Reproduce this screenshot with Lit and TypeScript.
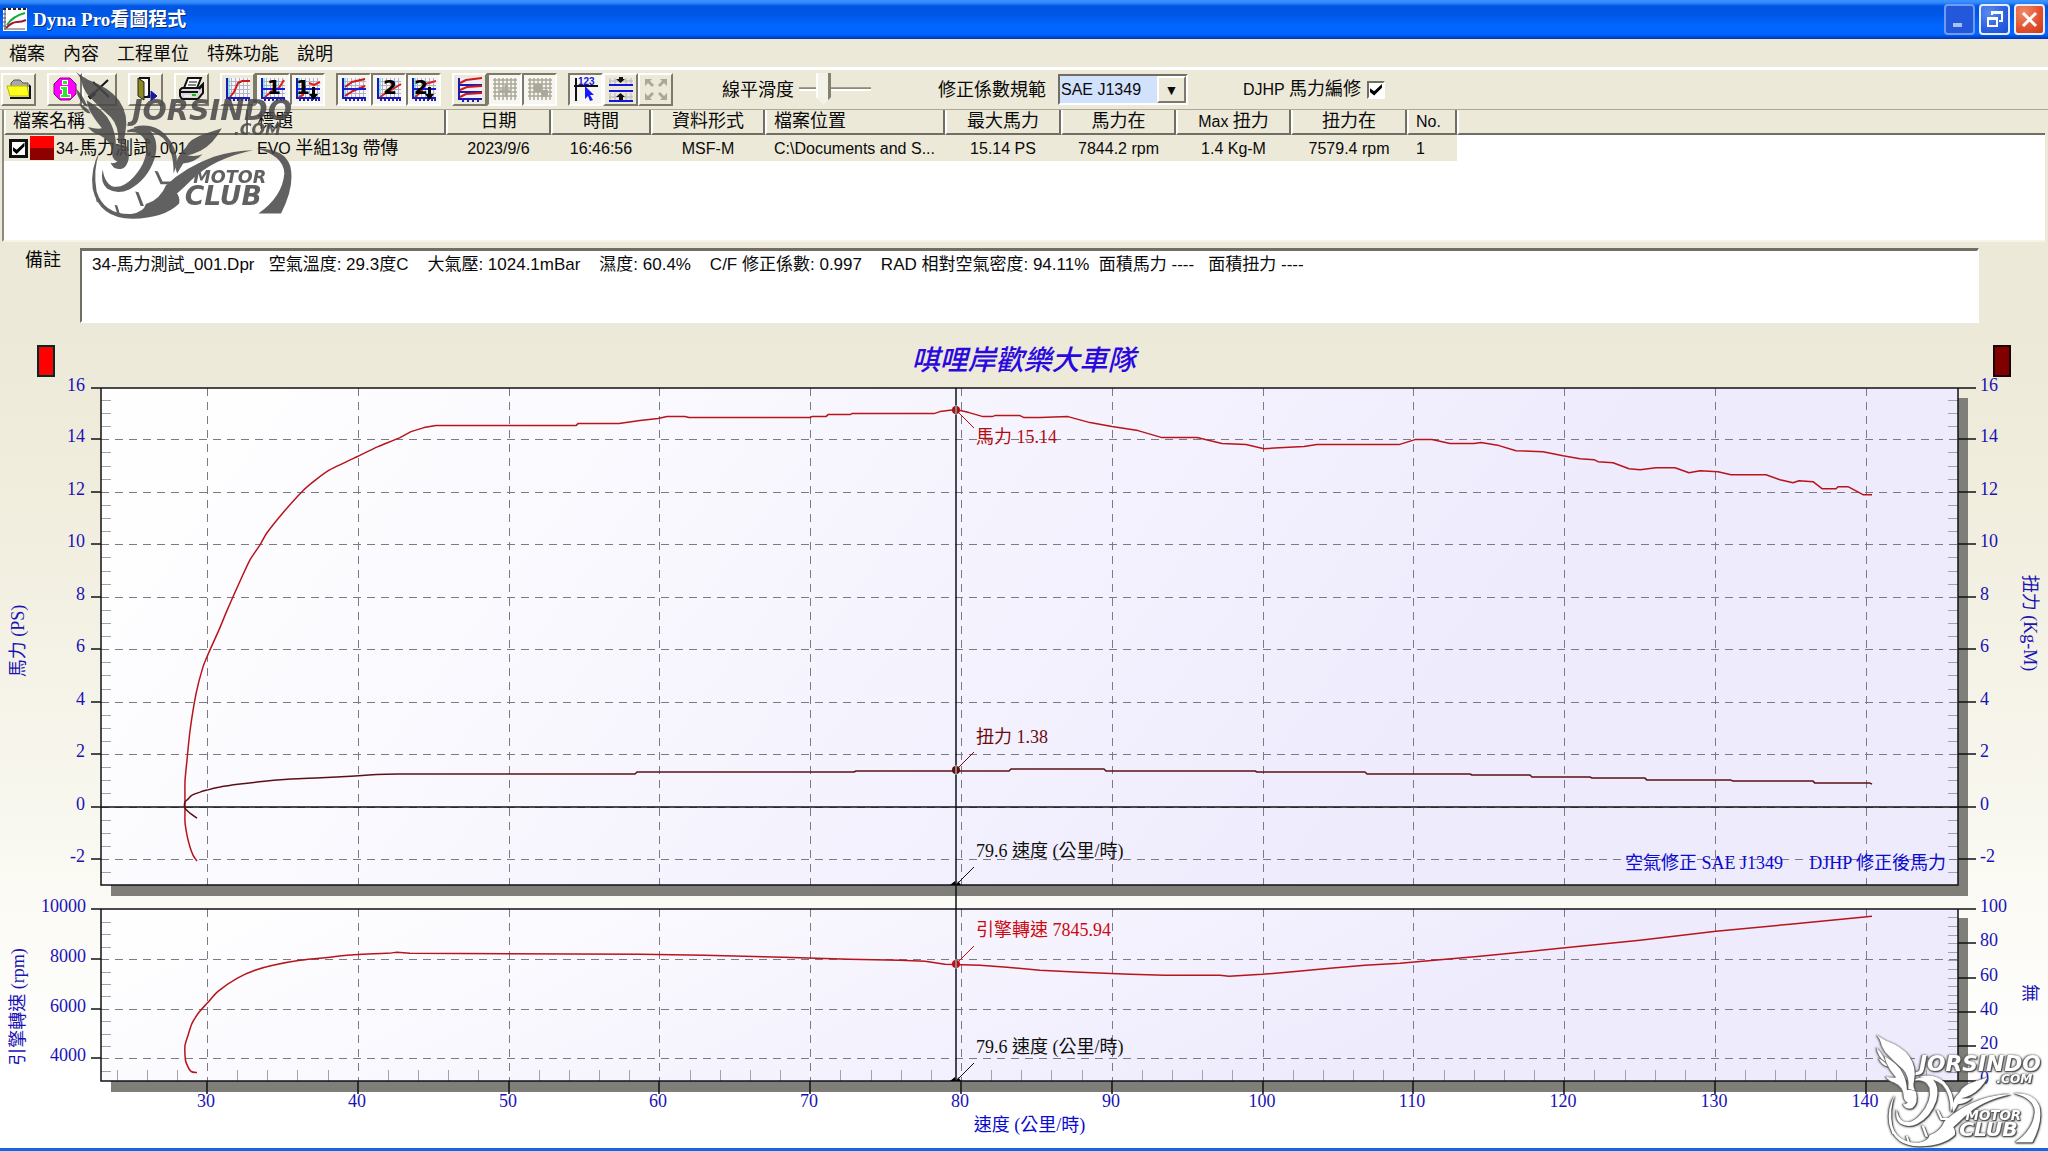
import { LitElement, html, svg, css } from "lit";
import { customElement, property, state } from "lit/decorators.js";
import { classMap } from "lit/directives/class-map.js";

/* ---------- text helper: CJK runs are set two pixels larger than Latin ---------- */
const mix = (text: string) =>
  text
    .split(/([\u4e00-\u9fff]+)/)
    .filter((t) => t)
    .map((t) => (/[\u4e00-\u9fff]/.test(t) ? html`<span class="cjk">${t}</span>` : t));

/* ---------- toolbar icons, 26 by 24 ---------- */
const frame = svg`
  <rect x="1" y="1" width="24" height="20" fill="#f6f6fa"/>
  <rect x="2" y="1" width="3" height="20" fill="#7fe9ff"/>
  <path d="M6.500 1V21M10.500 1V21M14.500 1V21M18.500 1V21M22.500 1V21M2 4.500H25M2 8.500H25M2 12.500H25M2 16.500H25" stroke="#b4b4bc" fill="none"/>
  <path d="M2 1V22M1 21H25M5 21v3M9 21v3M13 21v3M17 21v3M21 21v3M24 21v3" stroke="#1a1ab4" stroke-width="2" fill="none"/>`;
const midline = svg`<path d="M2 12H25" stroke="#1a1ae0" stroke-width="2"/>`;
const digit = (d: string, x: number) =>
  svg`<text x=${x} y="17" font-family="DejaVu Sans, sans-serif" font-weight="bold" font-size="20" fill="#000">${d}</text>`;
const down = svg`<path d="M17 10h3v7h3l-4.500 6L14 17h3z" fill="#000"/>`;
const mesh = svg`<path d="M1 3H25M1 7H25M1 11H25M1 15H25M1 19H25M3 1V23M7 1V23M11 1V23M15 1V23M19 1V23M23 1V23" stroke="#aca899" stroke-width="1.500" fill="none"/>`;

const icons: Record<string, unknown> = {
  open: svg`<path d="M5 6l3-3h6l3 3h5v4H5z" fill="#a9a9a9" stroke="#555"/><path d="M1 9h20l2 10H4z" fill="#ffff1e" stroke="#b8b800"/><path d="M23 7v13H4v2h21V9z" fill="#111"/>`,
  info: svg`<path d="M8 1h10l6 6v10l-6 6H8l-6-6V7z" fill="#f0f" stroke="#80106c"/><rect x="10.500" y="3.500" width="5" height="4" fill="#2ee62e" stroke="#fff"/><path d="M8.500 9.500h7v8h3v3h-10v-3h2v-5h-2z" fill="#2ee62e" stroke="#fff"/>`,
  cut: svg`<path d="M3 20L21 3M6 5L22 20" stroke="#111" stroke-width="2" fill="none"/><path d="M2 21l6-5" stroke="#111" stroke-width="4"/>`,
  exit: svg`<path d="M6 1h10v19h-5" fill="#fff" stroke="#111" stroke-width="2"/><path d="M5 1l6 4v18l-6-4z" fill="#8c8a1e" stroke="#222"/><path d="M14 19h7M18 14l6 5-6 5z" stroke="#1616a0" stroke-width="1" fill="#1616a0"/>`,
  print: svg`<path d="M9 1h13l-4 10H5z" fill="#fff" stroke="#111" stroke-width="2"/><path d="M10 5h8M9 8h8" stroke="#111"/><path d="M3 11h17l4-4v9l-5 6H3l-2-3v-6z" fill="#d8d8d8" stroke="#111" stroke-width="2"/><path d="M2 15h17M20 12l4-4" stroke="#111" stroke-width="2"/><rect x="13" y="17" width="4" height="2" fill="#1fb51f"/><path d="M5 19h7" stroke="#fff"/>`,
  curve: svg`${frame}<path d="M5 20l4-5 4-9 4-2h8" stroke="#d01818" stroke-width="2" fill="none"/>`,
  one: svg`${frame}<path d="M5 20l7-6 7-3 5-8" stroke="#e02020" stroke-width="2" fill="none"/>${midline}${digit("1", 7)}`,
  oneDown: svg`${frame}<path d="M4 20l4-2 2-9M14 6l5 2 6-3" stroke="#e02020" stroke-width="2" fill="none"/>${midline}${digit("1", 1)}${down}`,
  two: svg`${frame}<path d="M4 10l7-5 13-3M4 19l8-5 12-5" stroke="#d01818" stroke-width="2" fill="none"/>${midline}`,
  twoB: svg`${frame}<path d="M4 20l6-4 7-4 8-5" stroke="#e02020" stroke-width="2" fill="none"/>${digit("2", 7)}`,
  twoDown: svg`${frame}<path d="M4 20l6-5 4-8 11-3" stroke="#e02020" stroke-width="2" fill="none"/>${midline}${digit("2", 3)}${down}`,
  stack: svg`<rect x="1" y="1" width="24" height="21" fill="#efeff6"/><path d="M2 1V23M2 8H25M2 15H25M1 22H25M6 22v3M11 22v3M16 22v3M21 22v3" stroke="#1a1ab4" stroke-width="2" fill="none"/><path d="M3 6l6-3 16-2M3 13l7-3 15-1M3 20l6-3 16-1" stroke="#d01818" stroke-width="2" fill="none"/>`,
  meshA: svg`${mesh}<path d="M8 14h10M14 8v12" stroke="#aca899" stroke-width="3"/>`,
  meshB: svg`${mesh}<path d="M7 7h8v8H7zM14 13h7v7h-7z" fill="#aca899"/>`,
  pick: svg`<path d="M1 9H25M3 1V24" stroke="#111" stroke-width="2"/><text x="5" y="8" font-family="Liberation Sans, sans-serif" font-weight="bold" font-size="10" fill="#1616d8">123</text><path d="M12 9l9 9h-4l3 5-3 1-2-5-3 3z" fill="#1616ff"/>`,
  split: svg`<path d="M1 8H25M1 14H25" stroke="#1616d8" stroke-width="2"/><path d="M2 1V7M7 1V7M18 1V7M23 1V7M2 16V24M7 16V24M18 16V24M23 16V24M1 4H25M1 20H25" stroke="#b4b4bc" fill="none"/><path d="M1 24H25" stroke="#1616d8" stroke-width="2"/><path d="M11 0h4v2h-4zM8 2h9l-4.500 4zM8 20h9l-4.500-4zM11 20h4v3h-4z" fill="#111"/>`,
  expand: svg`<path d="M2 2h7L7 4l4 4-2 2-4-4-3 3zM24 2h-7l2 2-4 4 2 2 4-4 3 3zM2 23h7l-2-2 4-4-2-2-4 4-3-3zM24 23h-7l2-2-4-4 2-2 4 4 3-3z" fill="#aca899"/>`,
};

type Tool = { icon: string; name: string; down?: boolean; off?: boolean };
const TOOLS: Tool[][] = [
  [{ icon: "open", name: "開啟" }],
  [{ icon: "info", name: "資訊" }, { icon: "cut", name: "移除" }],
  [{ icon: "exit", name: "離開" }],
  [{ icon: "print", name: "列印" }],
  [{ icon: "curve", name: "曲線" }, { icon: "one", name: "圖一", down: true }, { icon: "oneDown", name: "圖一下移", down: true }],
  [{ icon: "two", name: "雙曲線", down: true }, { icon: "twoB", name: "圖二", down: true }, { icon: "twoDown", name: "圖二下移", down: true }],
  [{ icon: "stack", name: "三圖" }, { icon: "meshA", name: "格線一", down: true, off: true }, { icon: "meshB", name: "格線二", down: true, off: true }],
  [{ icon: "pick", name: "游標", down: true }, { icon: "split", name: "分割" }, { icon: "expand", name: "放大", off: true }],
];

type Column = { title: string; value: string; width: number; left?: boolean };
const COLUMNS: Column[] = [
  { title: "檔案名稱", value: "34-馬力測試_001", width: 244, left: true },
  { title: "標題", value: "EVO 半組13g 帶傳", width: 198, left: true },
  { title: "日期", value: "2023/9/6", width: 105 },
  { title: "時間", value: "16:46:56", width: 100 },
  { title: "資料形式", value: "MSF-M", width: 114 },
  { title: "檔案位置", value: "C:\\Documents and S...", width: 180, left: true },
  { title: "最大馬力", value: "15.14 PS", width: 116 },
  { title: "馬力在", value: "7844.2 rpm", width: 115 },
  { title: "Max 扭力", value: "1.4 Kg-M", width: 115 },
  { title: "扭力在", value: "7579.4 rpm", width: 116 },
  { title: "No.", value: "1", width: 50, left: true },
];

/* ---------- club emblem ---------- */
@customElement("club-emblem")
export class ClubEmblem extends LitElement {
  static styles = css`
    :host { display: block; pointer-events: none; }
    svg { display: block; width: 100%; height: auto; overflow: visible; }
    .word { font-family: "DejaVu Sans", sans-serif; font-weight: bold; font-style: italic; }
  `;
  render() {
    return html`<svg viewBox="220 212 664 448" fill="currentColor" role="img" aria-label="Jorsindo.com Motor Club">
      <path d="M226 216L262 238Q328 262 355 300Q386 345 374 398Q368 420 378 436L352 428Q358 380 330 350Q292 318 262 285Q246 262 244 248Q240 230 226 216Z"/>
      <path d="M226 264Q244 284 252 300L262 322Q232 306 226 264Z"/>
      <path d="M234 308Q262 322 270 340Q250 340 234 308Z"/>
      <path d="M258 300Q312 330 330 368Q346 400 346 436L334 452Q330 420 296 404Q272 396 262 380Q290 388 304 384Q284 360 276 346Q262 326 258 300Z"/>
      <path d="M334 440Q352 424 382 440Q392 486 368 504Q340 514 330 488Q340 492 350 484Q330 476 334 440Z"/>
      <path d="M380 390Q412 376 446 388Q478 420 462 476Q440 540 386 568Q350 584 320 566Q298 548 306 508Q312 548 334 558Q366 568 400 530Q446 478 436 424Q420 390 380 396Z"/>
      <path d="M400 380Q456 366 494 402Q530 440 530 492L519 520Q520 450 488 414Q452 384 400 384Z"/>
      <path d="M298 452Q268 506 276 566Q296 656 396 656Q492 654 536 610Q540 588 522 572Q520 556 552 520L530 536Q496 566 498 552Q478 600 436 612Q430 636 392 642Q310 644 288 574Q276 510 298 452Z"/>
      <path d="M496 556Q556 500 640 470Q700 450 758 450Q640 474 572 540Q540 572 524 584Z"/>
      <path d="M526 508Q524 470 556 442Q566 416 616 400L664 384Q640 430 600 452Q580 462 560 466Q590 470 606 462Q584 486 548 490L530 520Z"/>
      <path d="M768 446Q852 444 870 498Q884 560 842 640L774 640Q846 590 852 520Q850 466 768 446Z"/>
      <path d="M462 512l10 2 14 30 34 0-4 8-36 0zM404 574l10 2 16 42-10 0zM342 614l8 2 8 26-8 0zM286 592l6 8 8 0-4 6-8 0z"/>
      <text class="word" x="394" y="359" font-size="86">JORSINDO</text>
      <text class="word" x="700" y="404" font-size="48">.COM</text>
      <text class="word" x="578" y="550" font-size="53">MOTOR</text>
      <text class="word" x="553" y="614" font-size="80">CLUB</text>
    </svg>`;
  }
}

/* ---------- chart ---------- */
const GRID_W = 2048;
const GRID_H = 824;
const POWER =
  "197,537 193,531 190,523 187,511 185,498 185,483 185,457 187,436 190,407 196,370 203,343 210,326 219,306 226,289 233,273 242,253 250,236 260,221 267,209 283,189 302,168 316,156 330,146 357,133 378,123 400,114 411,108 424,104 436,102 576,102 578,100 619,100 640,97 658,95 667,93 685,93 689,94 810,94 812,93 826,93 828,91 850,91 852,90 934,90 940,88 956,86 969,89 983,93 992,93 995,92 1020,92 1024,94 1040,94 1068,93 1090,99 1112,103 1138,107 1162,114 1197,114 1222,120 1246,121 1264,125 1279,124 1304,123 1317,121 1399,121 1415,116 1432,116 1450,120 1474,120 1481,119 1499,122 1516,127 1543,128 1563,132 1580,135 1594,136 1598,138 1613,139 1629,145 1640,146 1656,144 1675,144 1689,149 1700,147 1718,148 1731,151 1766,151 1780,156 1793,159 1799,157 1813,158 1822,165 1836,165 1838,163 1848,163 1863,171 1872,171";
const TORQUE =
  "197,494 190,489 185,484 185,478 188,475 192,471 200,468 207,466 220,463 240,460 257,458 291,455 316,454 355,452 398,450 635,450 637,448 854,448 856,447 1009,447 1011,445 1104,445 1106,447 1255,447 1257,448 1365,448 1367,450 1470,450 1472,451 1530,451 1532,453 1590,453 1592,454 1645,454 1647,456 1731,456 1733,457 1813,457 1815,459 1870,459 1872,460";
const RPM =
  "197,748 191,747 186,738 185,731 185,721 188,711 192,699 199,688 208,678 218,667 237,654 255,646 273,641 300,636 330,633 347,631 387,629 397,628 410,629 640,630 705,631 784,633 849,635 900,636 925,637 945,640 980,641 1007,643 1040,646 1080,648 1130,650 1165,651 1220,651 1229,652 1262,650 1298,647 1330,644 1365,641 1400,639 1480,632 1560,624 1640,616 1716,607 1790,600 1862,593 1872,592";
/* the launch part of every run, left of this column, is drawn as a smooth curve */
const SMOOTH_UNTIL = 400;

@customElement("dyno-chart")
export class DynoChart extends LitElement {
  @state() w = window.innerWidth;
  @state() h = GRID_H;
  private observer?: ResizeObserver;

  static styles = css`
    :host { display: block; overflow: hidden; background: linear-gradient(#ece9d8 0%, #f0eddd 20%, #faf9f2 66%, #ffffff 90%); }
    svg { display: block; }
    text { font-family: "Liberation Serif", "Noto Sans CJK TC", serif; font-size: 18px; fill: #1a12b4; white-space: pre; }
    .title { font-size: 28px; font-style: italic; font-weight: 500; fill: #2a08e0; }
    .end { text-anchor: end; }
    .mid { text-anchor: middle; }
    .grid { stroke: #7c7a86; stroke-dasharray: 8 6; fill: none; }
    .axis { stroke: #101216; stroke-width: 1.5; fill: none; }
    .minor { stroke: #a3a2ab; fill: none; }
    .shadow { fill: #7f7e78; }
    .curve { fill: none; stroke-linejoin: round; stroke-width: 1.5; }
    .power { stroke: #b8141a; }
    .torque { stroke: #5c1016; }
    .leader { stroke-width: 1; fill: none; }
    .power-text { fill: #b40a10; }
    .torque-text { fill: #6a0a0a; }
    .rpm-text { fill: #cc0810; }
    .ink { fill: #101010; }
    .blue { fill: #0a0ad0; }
  `;

  connectedCallback() {
    super.connectedCallback();
    this.observer = new ResizeObserver(([entry]) => {
      this.w = Math.round(entry.contentRect.width);
      this.h = Math.round(entry.contentRect.height);
    });
    this.observer.observe(this);
  }
  disconnectedCallback() {
    super.disconnectedCallback();
    this.observer?.disconnect();
  }

  private x(v: number) {
    return 101 + ((v - 101) * (this.w - 191)) / (GRID_W - 191);
  }
  private y(v: number) {
    return (v * this.h) / GRID_H;
  }
  private speed(v: number) {
    return Math.round(this.x(207 + ((v - 30) * 1508) / 100));
  }
  private line(points: string, cls: string) {
    const raw = points.split(" ").map((p) => p.split(",").map(Number));
    const p = raw.map(([a, b]) => [this.x(a), this.y(b) + 0.5]);
    const f = (n: number) => n.toFixed(1);
    let d = `M${f(p[0][0])} ${f(p[0][1])}`;
    for (let i = 1; i < p.length; i++) {
      const a = p[i - 1], b = p[i];
      if (raw[i][0] <= SMOOTH_UNTIL && i + 1 < p.length) {
        const before = p[Math.max(i - 2, 0)], after = p[i + 1];
        d += `C${f(a[0] + (b[0] - before[0]) / 8)} ${f(a[1] + (b[1] - before[1]) / 8)} ${f(b[0] - (after[0] - a[0]) / 8)} ${f(b[1] - (after[1] - a[1]) / 8)} ${f(b[0])} ${f(b[1])}`;
      } else {
        d += `L${f(b[0])} ${f(b[1])}`;
      }
    }
    return svg`<path class="curve ${cls}" d=${d}/>`;
  }

  /* value-to-pixel helpers of the three vertical scales */
  private ps = (v: number) => Math.round(this.y(v === 16 ? 65 : 483 - v * 26.2));
  private rpm = (v: number) => Math.round(this.y(v === 10000 ? 585 : 635.5 - ((v - 8000) * 49.5) / 2000));
  private pct = (v: number) => Math.round(this.y(757 - v * 1.72));

  private plot(top: number, bottom: number, offset: number) {
    const r = this.w - 90;
    return svg`
      <rect class="shadow" x="111" y=${top + offset} width=${r - 101} height=${bottom - top + 11 - offset}/>
      <rect x="101" y=${top} width=${r - 101} height=${bottom - top} fill="url(#sky)"/>`;
  }

  private callout(x: number, dot: number, from: number, to: number, base: number, text: string, color: string, cls: string) {
    return svg`
      <path class="leader" stroke=${color} d="M${x} ${from}L${x + 18} ${to}"/>
      ${dot
        ? svg`<circle cx=${x} cy=${from} r="4" fill=${color}/><path d="M${x} ${from - 5}v10" stroke="#6f8f8f" stroke-width="2"/>`
        : svg`<path d="M${x - 6} ${from}l5-4 1 4zM${x + 1} ${from}l1-4 3 4z" fill="#000"/>`}
      <text class=${cls} x=${x + 20} y=${base}>${text}</text>`;
  }

  render() {
    const { w, h } = this;
    const r = w - 90;
    const t1 = this.ps(16), b1 = Math.round(this.y(561)), t2 = this.rpm(10000), b2 = Math.round(this.y(757));
    const cx = Math.round(this.x(956));
    const Y = (v: number) => Math.round(this.y(v));
    const range = (a: number, b: number, s: number) => Array.from({ length: Math.floor((b - a) / s + 1.001) }, (_, i) => a + i * s);
    const psMajor = range(-2, 16, 2);
    const rpmMajor = [4000, 6000, 8000, 10000];
    const pctMajor = range(0, 100, 20);
    const speeds = range(30, 140, 10);
    const skip = (list: number[], major: number[]) => list.filter((v) => !major.includes(v));
    return html`<svg width=${w} height=${h} viewBox="0 0 ${w} ${h}">
      <defs>
        <linearGradient id="sky" x1="0" y1="0" x2="0.82" y2="0.16">
          <stop offset="0.1" stop-color="#fefeff"/><stop offset="0.5" stop-color="#f7f6fe"/><stop offset="1" stop-color="#eeebfd"/>
        </linearGradient>
      </defs>
      ${this.plot(t1, b1, 10)} ${this.plot(t2, b2, 9)}
      <path class="grid" d=${psMajor.slice(0, -1).map((v) => `M101 ${this.ps(v) + 0.5}H${r}`).join("") +
        rpmMajor.slice(0, -1).map((v) => `M101 ${this.rpm(v) + 0.5}H${r}`).join("") +
        speeds.map((v) => `M${this.speed(v) + 0.5} ${t1}V${b1}M${this.speed(v) + 0.5} ${t2}V${b2}`).join("")}/>
      <path class="minor" d=${skip(range(-2.5, 15.5, 0.5), psMajor).map((v) => `M101 ${this.ps(v) + 0.5}h10M${r} ${this.ps(v) + 0.5}h-10`).join("") +
        skip(range(3500, 9500, 500), rpmMajor).map((v) => `M101 ${this.rpm(v) + 0.5}h10`).join("") +
        range(5, 95, 5).map((v) => `M${r} ${this.pct(v) + 0.5}h-10`).join("") +
        skip(range(24, 144, 2), speeds).map((v) => `M${this.speed(v) + 0.5} ${b2}v-11`).join("")}/>
      <path class="axis" d=${`M101 ${t1}H${r}V${b1}H101ZM101 ${t2}H${r}V${b2}H101ZM101 ${this.ps(0)}H${r}` +
        psMajor.map((v) => `M91 ${this.ps(v)}H101M${r} ${this.ps(v)}h18`).join("") +
        rpmMajor.map((v) => `M91 ${this.rpm(v)}H101`).join("") +
        pctMajor.map((v) => `M${r} ${this.pct(v)}h18`).join("") +
        speeds.map((v) => `M${this.speed(v)} ${b2}v13`).join("")}/>
      ${this.line(POWER, "power")} ${this.line(TORQUE, "torque")} ${this.line(RPM, "power")}
      <path class="axis" d="M${cx} ${t1}V${b2}"/>

      ${psMajor.map((v) => svg`<text class="end" x="85" y=${this.ps(v) + 3}>${v}</text><text x=${r + 22} y=${this.ps(v) + 3}>${v}</text>`)}
      ${rpmMajor.map((v) => svg`<text class="end" x="86" y=${this.rpm(v) + 3}>${v}</text>`)}
      ${pctMajor.map((v) => svg`<text x=${r + 22} y=${this.pct(v) + 3}>${v}</text>`)}
      ${speeds.map((v) => svg`<text class="mid" x=${this.speed(v) - 1} y=${b2 + 26}>${v}</text>`)}

      ${this.callout(cx, 1, Y(87), Y(87) + 18, Y(87) + 33, "馬力 15.14", "#b40a10", "power-text")}
      ${this.callout(cx, 1, Y(446), Y(446) - 18, Y(446) - 27, "扭力 1.38", "#6a0a0a", "torque-text")}
      ${this.callout(cx, 0, b1, b1 - 18, b1 - 28, "79.6 速度 (公里/時)", "#101010", "ink")}
      ${this.callout(cx, 1, Y(640), Y(640) - 18, Y(640) - 28, "引擎轉速 7845.94", "#cc0810", "rpm-text")}
      ${this.callout(cx, 0, b2, b2 - 18, b2 - 28, "79.6 速度 (公里/時)", "#101010", "ink")}

      <text class="title mid" x=${(101 + r) / 2 - 6} y=${Y(47)}>唭哩岸歡樂大車隊</text>
      <text class="blue end" x=${r - 175} y=${b1 - 16}>空氣修正 SAE J1349</text>
      <text class="blue end" x=${r - 12} y=${b1 - 16}>DJHP 修正後馬力</text>
      <text class="mid blue" x=${(101 + r) / 2} y=${b2 + 50}>速度 (公里/時)</text>
      <text class="mid" transform="translate(24 ${Y(318)}) rotate(-90)">馬力 (PS)</text>
      <text class="mid" transform="translate(24 ${Y(683)}) rotate(-90)">引擎轉速 (rpm)</text>
      <text class="mid" transform="translate(${w - 24} ${Y(300)}) rotate(90)">扭力 (Kg-M)</text>
      <text class="mid" transform="translate(${w - 24} ${Y(669)}) rotate(90)">無</text>
      <rect x="38" y=${t1 - 42} width="16" height="30" fill="#f00" stroke="#012a2a" stroke-width="2"/>
      <rect x=${w - 54} y=${t1 - 42} width="16" height="30" fill="#800000" stroke="#1c0202" stroke-width="2"/>
    </svg>`;
  }
}

/* ---------- application window ---------- */
@customElement("app-root")
export class AppRoot extends LitElement {
  @property() remark =
    "34-馬力測試_001.Dpr   空氣溫度: 29.3度C    大氣壓: 1024.1mBar    濕度: 60.4%    C/F 修正係數: 0.997    RAD 相對空氣密度: 94.11%  面積馬力 ----   面積扭力 ----";

  static styles = css`
    :host {
      display: flex; flex-direction: column; position: relative; box-sizing: border-box;
      height: 100vh; min-height: 700px; overflow: hidden; background: #ece9d8; color: #0a0a0a;
      border-bottom: 3px solid #1467dc;
      font-family: "Liberation Sans", "Noto Sans CJK TC", sans-serif; font-size: 16px; line-height: 24px;
    }
    * { box-sizing: border-box; }
    button, input, select, textarea { font: inherit; color: inherit; margin: 0; padding: 0; border-radius: 0; }
    .cjk { font-size: 18px; }

    .titlebar {
      display: flex; align-items: center; gap: 6px; height: 39px; flex: none; padding: 0 3px;
      background: linear-gradient(#3d95ff 0, #2f86fb 3px, #0055e2 6px, #0056e6 14px, #0066fe 25px, #0066ff 34px, #0047d6 37px, #0030b4 39px);
    }
    .titlebar h1 {
      flex: 1; margin: 0; color: #fff; font: bold 19px/24px "Liberation Serif", "Noto Sans CJK TC", serif;
      text-shadow: 1px 1px 0 #0a2a7a;
    }
    .app-icon { display: block; }
    .window-buttons { display: flex; gap: 4px; }
    .wb {
      width: 31px; height: 31px; padding: 0; border: 2px solid #e6eefc; border-radius: 4px; display: grid; place-items: center;
      background: radial-gradient(circle at 30% 25%, #5b8cf0, #2a5fe0 60%, #1c4fd4);
    }
    .wb.dim { border-color: #6f9cf2; background: #2358da; }
    .wb.close { background: radial-gradient(circle at 30% 25%, #f08a68, #e0502c 60%, #c83a14); }

    .menu { display: flex; height: 28px; flex: none; padding-top: 2px; }
    .menu button { border: 0; background: none; padding: 0 9px; font-size: 18px; }

    .toolbar { display: flex; align-items: center; height: 43px; flex: none; border-top: 3px solid #fff; border-bottom: 1px solid #aca899; padding-left: 1px; }
    .tools { display: flex; gap: 11px; }
    .group { display: flex; }
    .tool {
      width: 35px; height: 33px; display: grid; place-items: center; background: #ece9d8;
      border: 2px solid; border-color: #fff #7d7a6c #7d7a6c #fff;
    }
    .tool.down { border-color: #7d7a6c #fff #fff #7d7a6c; background: #f7f6f0; }
    .tool svg { display: block; }
    .field { display: flex; align-items: center; font-size: 18px; white-space: nowrap; }
    .latin { font-size: 16px; }
    .smooth { margin-left: 49px; gap: 5px; }
    .spec { margin-left: 67px; gap: 12px; }
    .edit { margin-left: 55px; gap: 6px; }

    .slider { appearance: none; width: 72px; height: 33px; background: none; }
    .slider::-webkit-slider-runnable-track {
      height: 33px; background: linear-gradient(#0000 14px, #aca899 14px, #84816f 16px, #fff 16px, #fff 18px, #0000 18px);
    }
    .slider::-webkit-slider-thumb {
      appearance: none; width: 15px; height: 32px;
      background:
        linear-gradient(45deg, #fff 50%, #0000 50%) 0 100% / 8px 3px no-repeat,
        linear-gradient(90deg, #fff 2px, #f3f2e8 2px, #f3f2e8 12px, #84816f 12px);
      clip-path: polygon(0 0, 100% 0, 100% 75%, 50% 100%, 0 75%);
    }
    .combo { position: relative; display: flex; width: 130px; height: 31px; border: 2px solid; border-color: #716f64 #fff #fff #716f64; background: #d2e2fd; }
    .combo select { appearance: none; flex: 1; border: 0; background: none; font-size: 16px; padding-left: 1px; }
    .combo::after {
      content: "▼"; position: absolute; right: 0; top: 0; bottom: 0; width: 25px; display: grid; place-items: center;
      font-size: 14px; pointer-events: none; background: #ece9d8; border: 2px solid; border-color: #fff #7d7a6c #7d7a6c #fff;
    }
    .check { appearance: none; width: 18px; height: 18px; background: #fff; border: 2px solid; border-color: #716f64 #fff #fff #716f64; display: grid; place-items: center; }
    .check.row { width: 19px; height: 19px; border: 3px solid #111; }
    .check:checked::before { content: ""; width: 12px; height: 12px; background: #000; clip-path: polygon(0 40%, 35% 65%, 100% 5%, 100% 35%, 35% 100%, 0 70%); }

    .list { height: 132px; flex: none; margin: 0 2px; background: #fff; border-left: 2px solid #8c8a7c; border-bottom: 2px solid #f6f4e8; border-right: 1px solid #ece9d8; }
    table { width: 100%; border-collapse: separate; border-spacing: 0; table-layout: fixed; }
    th {
      height: 25px; padding: 0; font-weight: normal; line-height: 22px; background: #ece9d8; white-space: nowrap;
      border-bottom: 2px solid #716f64; border-right: 2px solid #716f64; border-left: 2px solid #fff;
    }
    th:last-child { border-right: 0; }
    td { height: 25px; padding: 1px 0 0; line-height: 24px; background: #ece9d8; text-align: center; white-space: nowrap; }
    td:last-child { background: #fff; }
    th.left { text-align: left; padding-left: 7px; }
    td.left { text-align: left; padding-left: 9px; }
    td.name { padding: 0 0 0 5px; }
    .file { display: flex; align-items: center; gap: 2px; height: 25px; }
    .file label { padding-top: 1px; }
    .swatch { width: 24px; height: 24px; background: linear-gradient(#ff0000 50%, #8e0000 50%); }

    .remark { display: flex; flex: none; height: 81px; padding: 6px 69px 0 25px; gap: 19px; background: #ece9d8; }
    .remark label { font-size: 18px; }
    .remark textarea {
      flex: 1; height: 75px; resize: none; outline: none; background: #fff; border: 2px solid; border-top-width: 3px;
      border-color: #716f64 #fff #fff #716f64; padding: 2px 10px; font-size: 17px; line-height: 24px; overflow: hidden;
    }
    dyno-chart { flex: 1; min-height: 0; }
    .mark { position: absolute; }
    .mark.dark { left: 74px; top: 71px; width: 221px; color: #484848; opacity: 0.86; }
    .mark.light { right: 5px; bottom: 1px; width: 168px; color: #fff; filter: drop-shadow(1px 1px 0 #555) drop-shadow(-1px 0 0 #777) drop-shadow(0 0 1px #444); }
  `;

  render() {
    return html`
      <header class="titlebar">
        <svg class="app-icon" width="24" height="23" viewBox="0 0 24 23">
          <rect width="24" height="23" fill="#fff"/><path d="M0 1H24" stroke="#222" stroke-width="2" stroke-dasharray="3 2"/>
          <path d="M2 2V22M0 6h3M0 10h3M0 14h3M0 18h3M1 21H22" stroke="#555" fill="none"/>
          <path d="M4 17Q10 8 22 5" stroke="#18a838" stroke-width="2" fill="none"/><path d="M3 20Q9 14 14 14T23 12" stroke="#a01830" stroke-width="2" fill="none"/>
        </svg>
        <h1>Dyna Pro看圖程式</h1>
        <div class="window-buttons">
          <button class="wb dim" aria-label="最小化"><svg width="21" height="21" viewBox="0 0 21 21"><rect x="4" y="14" width="9" height="4" fill="#a9c0f4"/></svg></button>
          <button class="wb" aria-label="還原"><svg width="21" height="21" viewBox="0 0 21 21" fill="none" stroke="#fff" stroke-width="2"><path d="M8 6V3h10v9h-3M8 4h10"/><path d="M4 9h9v8H4zM4 10h9"/></svg></button>
          <button class="wb close" aria-label="關閉"><svg width="21" height="21" viewBox="0 0 21 21"><path d="M4 4L17 17M17 4L4 17" stroke="#fff" stroke-width="3"/></svg></button>
        </div>
      </header>

      <nav class="menu">
        ${["檔案", "內容", "工程單位", "特殊功能", "說明"].map((m) => html`<button>${m}</button>`)}
      </nav>

      <div class="toolbar">
        <div class="tools">
          ${TOOLS.map((g) => html`<div class="group">
            ${g.map((t) => html`<button class=${classMap({ tool: true, down: !!t.down })} aria-label=${t.name} ?disabled=${t.off}>
              <svg width="26" height="25" viewBox="0 0 26 25">${icons[t.icon]}</svg>
            </button>`)}
          </div>`)}
        </div>
        <div class="field smooth">
          <label for="smooth">線平滑度</label>
          <input class="slider" id="smooth" type="range" min="0" max="10" value="3" />
        </div>
        <div class="field spec">
          <label for="spec">修正係數規範</label>
          <span class="combo"><select id="spec"><option>SAE J1349</option></select></span>
        </div>
        <div class="field edit">
          <label for="edit"><span class="latin">DJHP </span>馬力編修</label>
          <input class="check" id="edit" type="checkbox" checked />
        </div>
      </div>

      <div class="list">
        <table>
          <colgroup>
            ${COLUMNS.map((c) => html`<col style="width:${c.width}px" />`)}
            <col />
          </colgroup>
          <thead>
            <tr>${COLUMNS.map((c) => html`<th class=${c.left ? "left" : ""}>${mix(c.title)}</th>`)}<th></th></tr>
          </thead>
          <tbody>
            <tr>
              ${COLUMNS.map((c, i) => i === 0
                ? html`<td class="left name"><div class="file">
                    <input class="check row" id="file" type="checkbox" checked /><span class="swatch"></span>
                    <label for="file">${mix(c.value)}</label></div></td>`
                : html`<td class=${c.left ? "left" : ""}>${mix(c.value)}</td>`)}
              <td></td>
            </tr>
          </tbody>
        </table>
      </div>

      <div class="remark">
        <label for="remark">備註</label>
        <textarea id="remark" .value=${this.remark} spellcheck="false"></textarea>
      </div>

      <dyno-chart></dyno-chart>

      <club-emblem class="mark dark"></club-emblem>
      <club-emblem class="mark light"></club-emblem>
    `;
  }
}
